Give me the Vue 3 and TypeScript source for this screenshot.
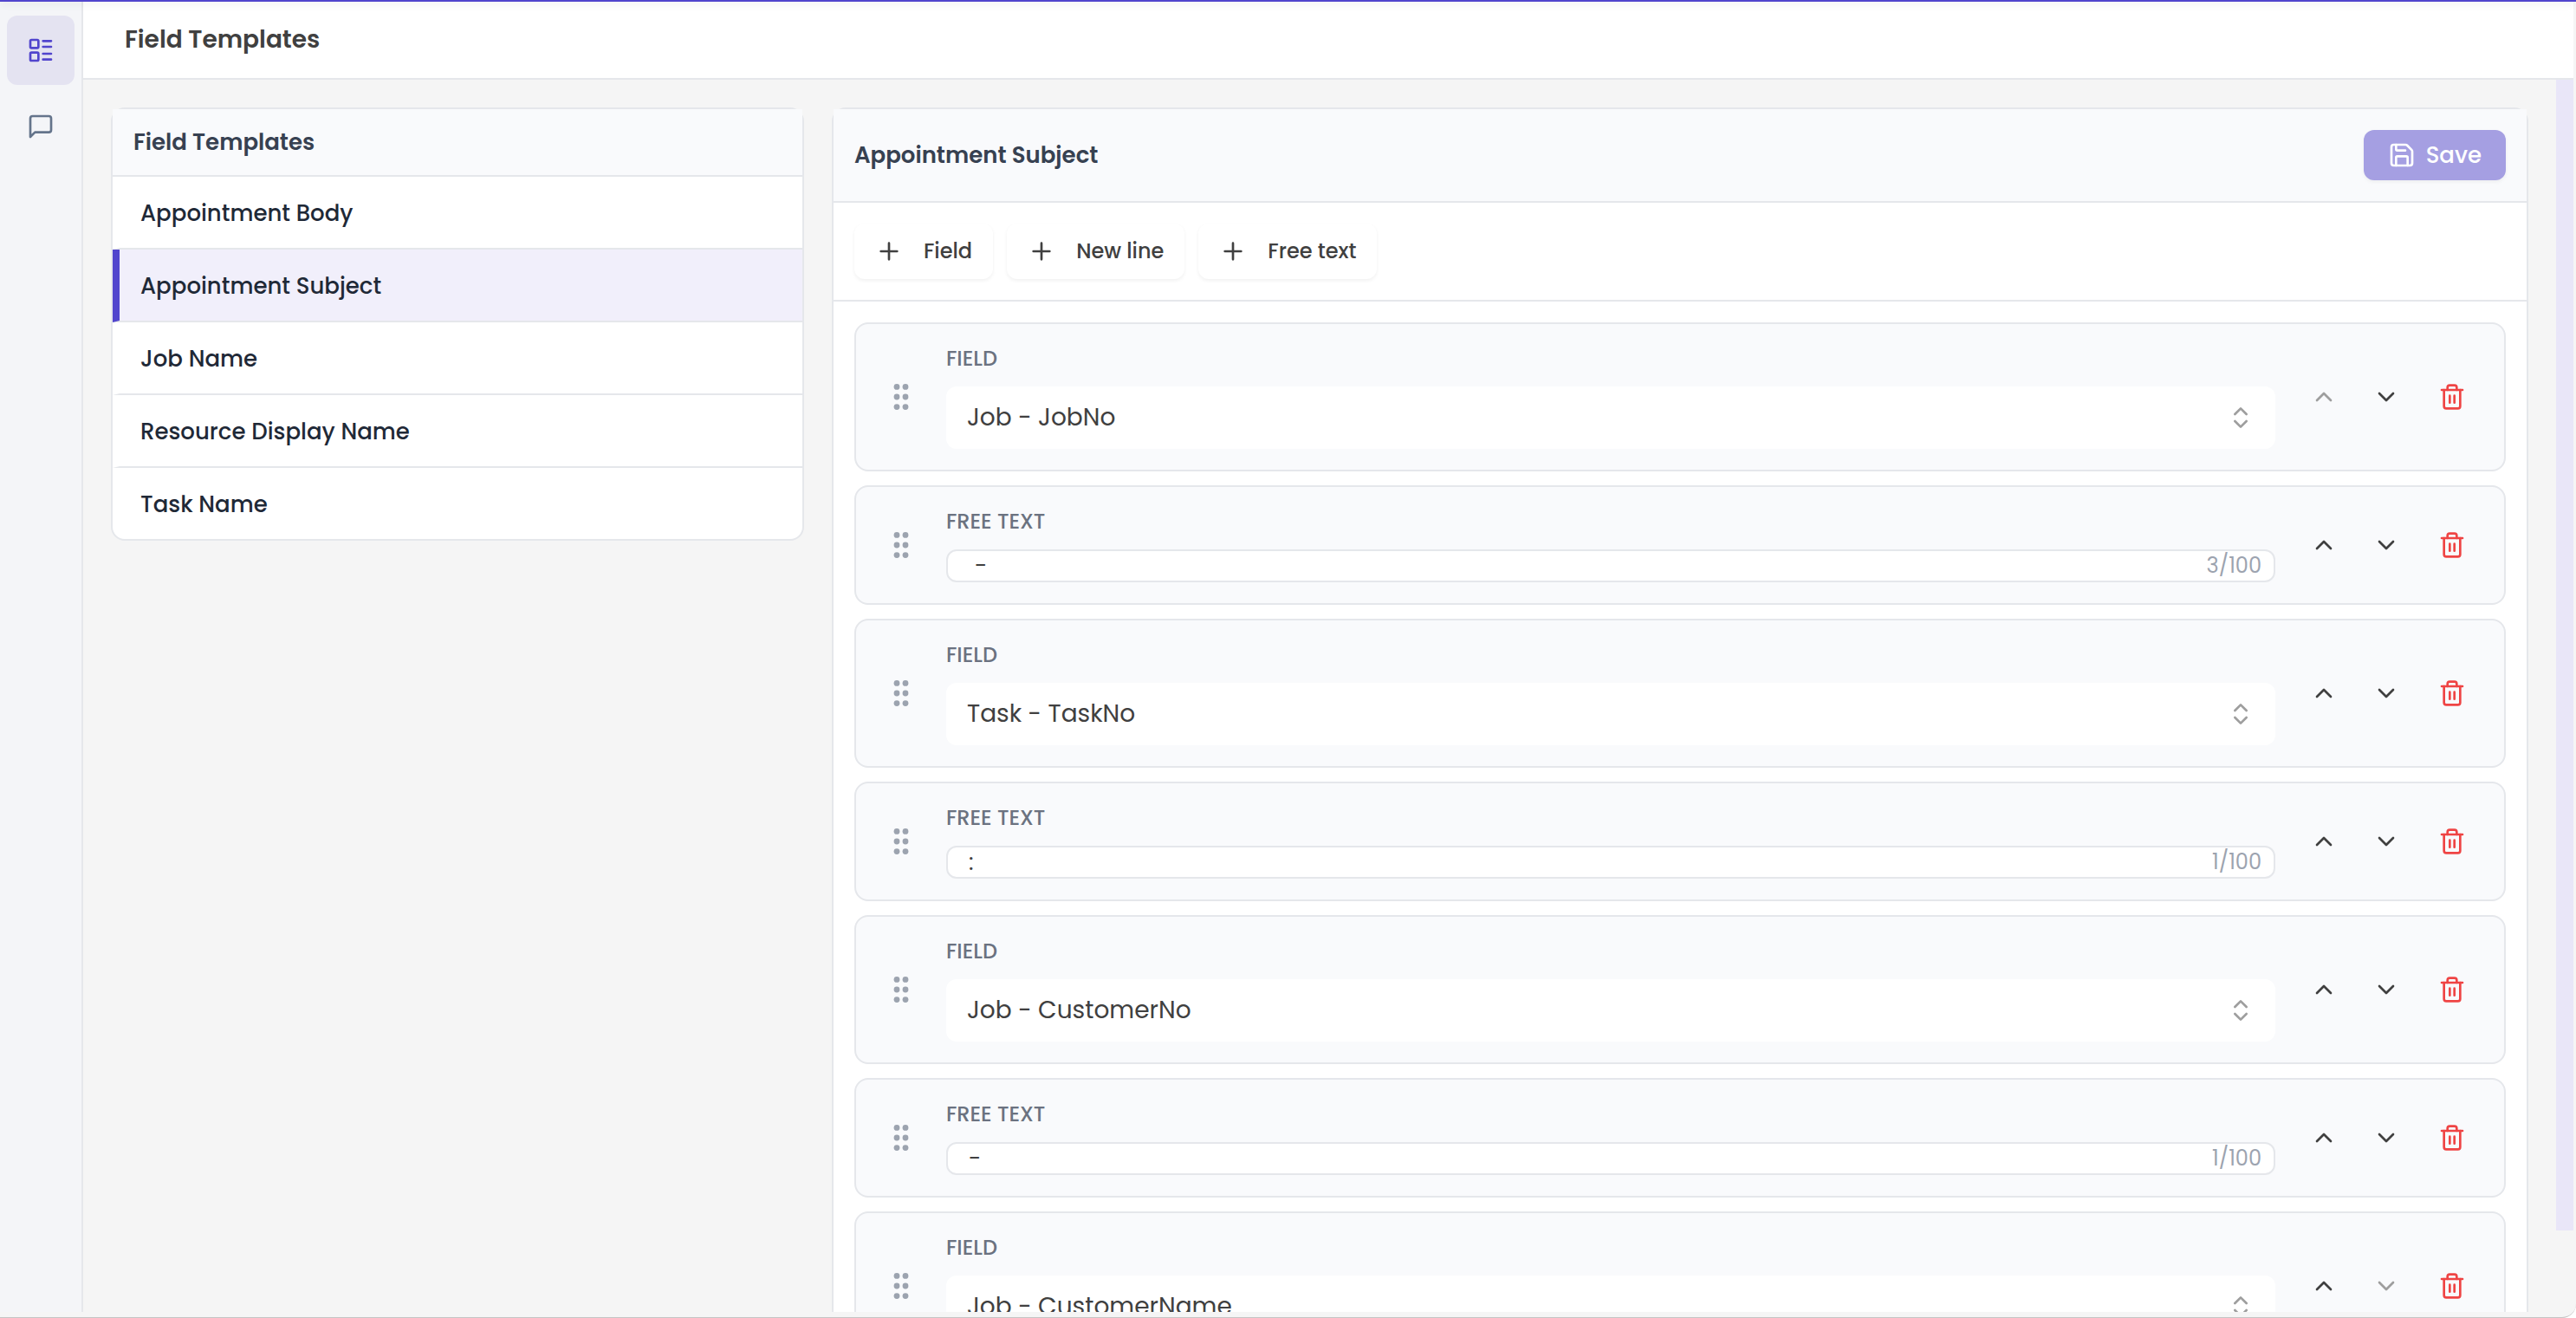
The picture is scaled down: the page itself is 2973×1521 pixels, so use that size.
<script setup lang="ts">
import { ref } from 'vue'

type Part = { id: number; kind: 'field' | 'text'; value: string }

const templates = [
  'Appointment Body',
  'Appointment Subject',
  'Job Name',
  'Resource Display Name',
  'Task Name',
]
const selected = ref('Appointment Subject')

const fieldOptions = [
  'Job - JobNo',
  'Task - TaskNo',
  'Job - CustomerNo',
  'Job - CustomerName',
]

const parts = ref<Part[]>([
  { id: 1, kind: 'field', value: 'Job - JobNo' },
  { id: 2, kind: 'text', value: ' - ' },
  { id: 3, kind: 'field', value: 'Task - TaskNo' },
  { id: 4, kind: 'text', value: ':' },
  { id: 5, kind: 'field', value: 'Job - CustomerNo' },
  { id: 6, kind: 'text', value: '-' },
  { id: 7, kind: 'field', value: 'Job - CustomerName' },
])

const maxLength = 100

function move(index: number, step: number) {
  const list = parts.value
  const [part] = list.splice(index, 1)
  list.splice(index + step, 0, part)
}

function remove(index: number) {
  parts.value.splice(index, 1)
}
</script>

<template>
  <div class="app">
    <div class="accent"></div>
    <div class="shell">
      <nav class="rail" aria-label="Sections">
        <button class="rail-button active" type="button" aria-label="Field templates">
          <svg class="icon" viewBox="0 0 24 24">
            <rect x="3" y="3" width="7" height="7" rx="1" />
            <rect x="3" y="14" width="7" height="7" rx="1" />
            <path d="M14 4h7M14 9h7M14 15h7M14 20h7" />
          </svg>
        </button>
        <button class="rail-button" type="button" aria-label="Messages">
          <svg class="icon" viewBox="0 0 24 24">
            <path d="M21 15a2 2 0 0 1-2 2H7l-4 4V5a2 2 0 0 1 2-2h14a2 2 0 0 1 2 2z" />
          </svg>
        </button>
      </nav>

      <div class="main">
        <header class="page-header">
          <h1>Field Templates</h1>
        </header>

        <div class="scroll-area">
          <main class="content">
            <section class="card templates">
              <header class="templates-header"><h2>Field Templates</h2></header>
              <ul>
                <li v-for="name in templates" :key="name">
                  <button
                    class="template"
                    :class="{ selected: name === selected }"
                    type="button"
                    @click="selected = name"
                  >
                    {{ name }}
                  </button>
                </li>
              </ul>
            </section>

            <section class="card editor">
              <header class="editor-header">
                <h2>{{ selected }}</h2>
                <button class="save" type="button">
                  <svg class="icon" viewBox="0 0 24 24">
                    <path d="M15.2 3a2 2 0 0 1 1.4.6l3.8 3.8a2 2 0 0 1 .6 1.4V19a2 2 0 0 1-2 2H5a2 2 0 0 1-2-2V5a2 2 0 0 1 2-2z" />
                    <path d="M17 21v-7a1 1 0 0 0-1-1H8a1 1 0 0 0-1 1v7" />
                    <path d="M7 3v4a1 1 0 0 0 1 1h7" />
                  </svg>
                  Save
                </button>
              </header>

              <div class="toolbar">
                <button v-for="label in ['Field', 'New line', 'Free text']" :key="label" class="add" type="button">
                  <svg class="icon" viewBox="0 0 24 24"><path d="M5 12h14M12 5v14" /></svg>
                  {{ label }}
                </button>
              </div>

              <ol class="parts">
                <li v-for="(part, index) in parts" :key="part.id" class="part">
                  <button class="handle" type="button" aria-label="Drag to reorder">
                    <svg viewBox="0 0 20 32">
                      <circle v-for="n in 6" :key="n" :cx="n % 2 ? 5 : 15" :cy="4.4 + Math.floor((n - 1) / 2) * 11.6" r="3.4" />
                    </svg>
                  </button>

                  <div class="part-body">
                    <label :for="`part-${part.id}`">{{ part.kind === 'field' ? 'FIELD' : 'FREE TEXT' }}</label>
                    <div v-if="part.kind === 'field'" class="select-box">
                      <select :id="`part-${part.id}`" v-model="part.value">
                        <option v-for="option in fieldOptions" :key="option">{{ option }}</option>
                      </select>
                      <svg class="icon" viewBox="0 0 24 24"><path d="m7 15 5 5 5-5M7 9l5-5 5 5" /></svg>
                    </div>
                    <div v-else class="text-box">
                      <input :id="`part-${part.id}`" v-model="part.value" type="text" :maxlength="maxLength" />
                      <span>{{ part.value.length }}/{{ maxLength }}</span>
                    </div>
                  </div>

                  <div class="actions">
                    <button type="button" aria-label="Move up" :disabled="index === 0" @click="move(index, -1)">
                      <svg class="icon" viewBox="0 0 24 24"><path d="m18 15-6-6-6 6" /></svg>
                    </button>
                    <button type="button" aria-label="Move down" :disabled="index === parts.length - 1" @click="move(index, 1)">
                      <svg class="icon" viewBox="0 0 24 24"><path d="m6 9 6 6 6-6" /></svg>
                    </button>
                    <button class="delete" type="button" aria-label="Delete" @click="remove(index)">
                      <svg class="icon" viewBox="0 0 24 24">
                        <path d="M3 6h18" />
                        <path d="M19 6v14a2 2 0 0 1-2 2H7a2 2 0 0 1-2-2V6" />
                        <path d="M8 6V4a2 2 0 0 1 2-2h4a2 2 0 0 1 2 2v2" />
                        <path d="M10 11v6M14 11v6" />
                      </svg>
                    </button>
                  </div>
                </li>
              </ol>
            </section>
          </main>
          <div class="scrollbar"><div class="thumb"></div></div>
        </div>
      </div>
    </div>
  </div>
</template>

<style>
body {
  margin: 0;
  background: #ffffff;
}
</style>

<style scoped>
* {
  box-sizing: border-box;
}

button,
input,
select {
  margin: 0;
  padding: 0;
  border: 0;
  background: none;
  color: inherit;
  font: inherit;
}

h1,
h2,
ul,
ol {
  margin: 0;
  padding: 0;
  list-style: none;
}

.app {
  display: flex;
  flex-direction: column;
  height: 100vh;
  padding-bottom: 6px;
  overflow: hidden;
  border-bottom: 1px solid #c4c4c4;
  border-bottom-right-radius: 16px;
  background: #f5f5f5;
  color: #404040;
  font-family: Poppins, Inter, sans-serif;
  font-size: 26px;
  line-height: 36px;
}

.accent {
  position: relative;
  z-index: 1;
  flex: none;
  height: 2px;
  background: #5145cd;
  box-shadow: 0 2px 10px rgba(0, 0, 0, 0.16);
}

.shell {
  display: flex;
  flex: 1;
  min-height: 0;
  padding-right: 3px;
}

.icon {
  flex: none;
  width: 32px;
  height: 32px;
  fill: none;
  stroke: currentColor;
  stroke-width: 2;
  stroke-linecap: round;
  stroke-linejoin: round;
}

.rail {
  display: flex;
  flex: none;
  flex-direction: column;
  gap: 8px;
  width: 96px;
  padding: 16px 8px;
  border-right: 2px solid #e5e7eb;
  background: #f4f5f8;
}

.rail-button {
  display: flex;
  align-items: center;
  justify-content: center;
  height: 80px;
  border-radius: 12px;
  color: #64748b;
}

.rail-button.active {
  background: #e4e3f1;
  color: #5145cd;
}

.main {
  display: flex;
  flex: 1;
  flex-direction: column;
  min-width: 0;
}

.page-header {
  display: flex;
  flex: none;
  align-items: center;
  height: 90px;
  padding: 0 48px;
  border-bottom: 2px solid #e5e7eb;
  background: #ffffff;
}

.page-header h1 {
  font-size: 28px;
  font-weight: 600;
}

.scroll-area {
  display: flex;
  flex: 1;
  min-height: 0;
}

.content {
  display: flex;
  flex: 1;
  align-items: flex-start;
  gap: 32px;
  min-width: 0;
  padding: 32px;
  overflow-y: auto;
  scrollbar-width: none;
}

.scrollbar {
  flex: none;
  width: 20px;
}

.thumb {
  height: 93.4%;
  background: #e9e6f8;
}

.card {
  border: 2px solid #e5e7eb;
  border-radius: 16px;
  background: #ffffff;
}

.card h2 {
  color: #374151;
  font-size: 26px;
  font-weight: 600;
}

.templates {
  flex: none;
  width: 800px;
}

.templates-header {
  padding: 20px 24px;
  border-bottom: 2px solid #e5e7eb;
  background: #f9fafc;
}

.template {
  display: block;
  width: 100%;
  padding: 24px 24px 22px;
  border-bottom: 2px solid #e5e7eb;
  border-left: 8px solid transparent;
  color: #1f2937;
  font-weight: 500;
  text-align: left;
}

li:last-child .template {
  border-bottom: 0;
}

.template.selected {
  border-left-color: #5145cd;
  background: #f1effb;
}

.editor {
  flex: 1;
  min-width: 0;
}

.editor-header {
  display: flex;
  align-items: center;
  justify-content: space-between;
  padding: 24px;
  border-bottom: 2px solid #e5e7eb;
  background: #f9fafc;
}

.save {
  display: flex;
  align-items: center;
  gap: 12px;
  height: 58px;
  padding: 0 28px;
  border-radius: 12px;
  background: #a59fe2;
  box-shadow: 0 2px 4px rgba(0, 0, 0, 0.05);
  color: #ffffff;
  font-weight: 500;
}

.toolbar {
  display: flex;
  gap: 16px;
  padding: 24px;
  border-bottom: 2px solid #e5e7eb;
}

.add {
  display: flex;
  align-items: center;
  gap: 24px;
  height: 64px;
  padding: 0 24px;
  border-radius: 12px;
  background: #ffffff;
  box-shadow: 0 2px 4px rgba(0, 0, 0, 0.06);
  font-size: 24px;
  font-weight: 500;
}

.parts {
  display: flex;
  flex-direction: column;
  gap: 16px;
  padding: 24px;
}

.part {
  display: flex;
  align-items: center;
  gap: 24px;
  padding: 24px;
  border: 2px solid #e5e7eb;
  border-radius: 16px;
  background: #f9fafc;
}

.handle {
  display: flex;
  flex: none;
  justify-content: center;
  width: 56px;
}

.handle svg {
  width: 20px;
  height: 32px;
  fill: #9ca3af;
}

.part-body {
  display: flex;
  flex: 1;
  flex-direction: column;
  gap: 16px;
  min-width: 0;
}

.part-body label {
  color: #6b7280;
  font-size: 24px;
  font-weight: 500;
  line-height: 32px;
}

.select-box {
  display: grid;
  align-items: center;
  height: 72px;
  border-radius: 12px;
  background: #ffffff;
}

.select-box select,
.select-box .icon {
  grid-area: 1 / 1;
}

.select-box select {
  width: 100%;
  height: 72px;
  padding: 0 24px;
  appearance: none;
  font-size: 28px;
}

.select-box .icon {
  justify-self: end;
  margin-right: 24px;
  color: #9e9e9e;
  pointer-events: none;
}

.text-box {
  display: flex;
  align-items: center;
  height: 38px;
  padding: 0 14px 0 24px;
  border: 2px solid #e5e7eb;
  border-radius: 12px;
  background: #ffffff;
}

.text-box input {
  flex: 1;
  min-width: 0;
  height: 34px;
}

.text-box span {
  color: #9ca3af;
  font-size: 24px;
}

.actions {
  display: flex;
  flex: none;
  gap: 8px;
}

.actions button {
  display: flex;
  align-items: center;
  justify-content: center;
  width: 64px;
  height: 64px;
}

.actions button:disabled {
  color: #9e9e9e;
}

.actions .delete {
  width: 72px;
  color: #ef4444;
}
</style>
